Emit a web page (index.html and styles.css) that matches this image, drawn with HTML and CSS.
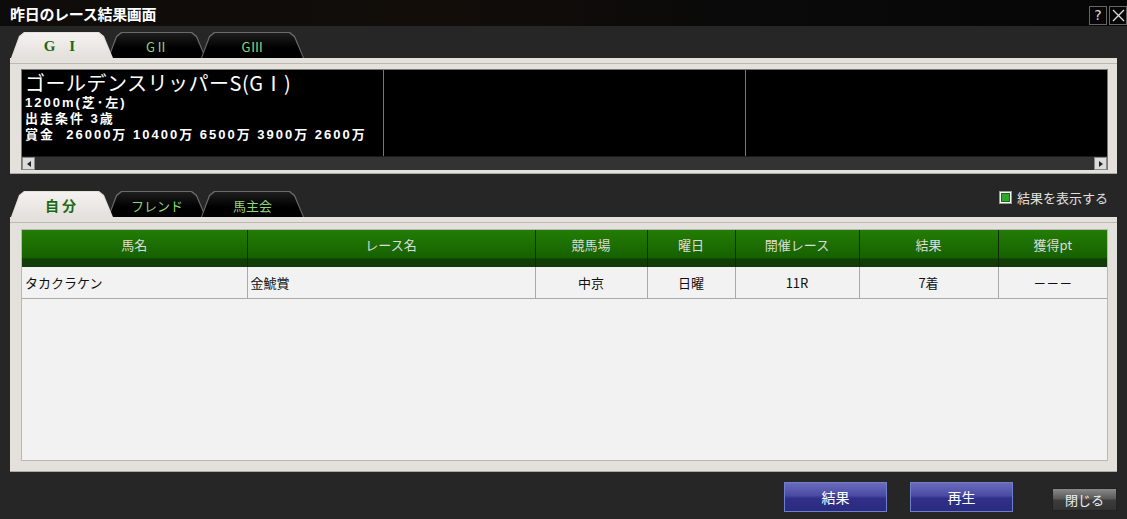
FILE: index.html
```html
<!DOCTYPE html>
<html lang="ja">
<head>
    <meta charset="UTF-8">
    <meta name="viewport" content="width=device-width, initial-scale=1.0">
    <link rel="stylesheet" href="styles.css">
</head>
<body>
    <div class="window">
        <!-- Title bar -->
        <div class="titlebar">
            <span class="title">昨日のレース結果画面</span>
            <div class="title-buttons">
                <span class="tb-btn">?</span>
                <span class="tb-btn">
                    <svg width="13" height="13" viewBox="0 0 13 13"><path d="M1 1 L12 12 M12 1 L1 12" stroke="#ddd" stroke-width="1.3"/></svg>
                </span>
            </div>
        </div>

        <!-- Grade tabs -->
        <div class="tabs">
            <div class="tab active"><span class="tab-label grade">G I</span></div>
            <div class="tab"><span class="tab-label">GⅡ</span></div>
            <div class="tab"><span class="tab-label">GⅢ</span></div>
        </div>

        <!-- Race info -->
        <div class="panel info-panel">
            <div class="info-box">
                <div class="info-cols">
                    <div class="info-col">
                        <div class="race-name">ゴールデンスリッパーS(GⅠ)</div>
                        <div class="race-line">1200m(芝･左)</div>
                        <div class="race-line">出走条件 3歳</div>
                        <div class="race-line">賞金&nbsp; 26000万 10400万 6500万 3900万 2600万</div>
                    </div>
                    <div class="info-col"></div>
                    <div class="info-col"></div>
                </div>
                <div class="hscroll">
                    <span class="arrow-btn">
                        <svg width="6" height="6" viewBox="0 0 6 6"><path d="M5 0 L1 3 L5 6 Z" fill="#222"/></svg>
                    </span>
                    <span class="arrow-btn">
                        <svg width="6" height="6" viewBox="0 0 6 6"><path d="M1 0 L5 3 L1 6 Z" fill="#222"/></svg>
                    </span>
                </div>
            </div>
        </div>

        <!-- Result tabs -->
        <div class="tab-row">
            <div class="tabs">
                <div class="tab active"><span class="tab-label">自分</span></div>
                <div class="tab"><span class="tab-label">フレンド</span></div>
                <div class="tab"><span class="tab-label">馬主会</span></div>
            </div>
            <label class="check">
                <span class="check-box"><span class="check-fill"></span></span>
                結果を表示する
            </label>
        </div>

        <div class="panel result-panel">
            <div class="table-box">
                <table class="results">
                    <thead>
                        <tr>
                            <th class="c-horse">馬名</th>
                            <th class="c-race">レース名</th>
                            <th class="c-course">競馬場</th>
                            <th class="c-day">曜日</th>
                            <th class="c-num">開催レース</th>
                            <th class="c-res">結果</th>
                            <th class="c-pt">獲得pt</th>
                        </tr>
                    </thead>
                    <tbody>
                        <tr>
                            <td class="left">タカクラケン</td>
                            <td class="left">金鯱賞</td>
                            <td>中京</td>
                            <td>日曜</td>
                            <td>11R</td>
                            <td>7着</td>
                            <td>－－－</td>
                        </tr>
                    </tbody>
                </table>
            </div>
        </div>

        <!-- Footer buttons -->
        <div class="footer">
            <button class="btn-blue">結果</button>
            <button class="btn-blue">再生</button>
            <button class="btn-close">閉じる</button>
        </div>
    </div>
</body>
</html>
```

FILE: styles.css
```css
body {
    margin: 0;
    padding: 0;
    background-color: #262626;
    font-family: "Noto Sans CJK JP", "Noto Sans", sans-serif;
}

.window {
    width: 1127px;
    height: 519px;
    background-color: #262626;
    overflow: hidden;
}

/* Title bar */
.titlebar {
    height: 26px;
    background: linear-gradient(to right, #0e0c0a, #120d09 40%, #0a0a0a 65%, #060606);
    display: flex;
    justify-content: space-between;
    align-items: center;
    padding: 0 0 0 10px;
}

.title {
    color: #fff;
    font-size: 15px;
    font-weight: bold;
    letter-spacing: -0.3px;
}

.title-buttons {
    display: flex;
    gap: 2px;
    align-self: flex-start;
    margin-top: 6px;
}

.tb-btn {
    width: 16px;
    height: 17px;
    border: 1px solid #666;
    color: #ddd;
    font-size: 14px;
    line-height: 17px;
    display: flex;
    align-items: center;
    justify-content: center;
    font-family: "DejaVu Sans", sans-serif;
}

/* Tabs */
.tabs {
    display: flex;
    height: 26px;
    padding-left: 11px;
    margin-top: 6px;
}

.tab {
    width: 102px;
    height: 26px;
    margin-right: -5px;
    background: #6a6a6a;
    clip-path: polygon(0 100%, 8px 4px, 13px 0, calc(100% - 14px) 0, calc(100% - 9px) 4px, 100% 100%);
    position: relative;
    display: flex;
    align-items: center;
    justify-content: center;
}

.tab::before {
    content: "";
    position: absolute;
    inset: 1px 1px 0 1px;
    background: linear-gradient(#1e1e1e, #000 60%);
    clip-path: polygon(0 100%, 8px 4px, 13px 0, calc(100% - 14px) 0, calc(100% - 9px) 4px, 100% 100%);
}

.tab-label {
    position: relative;
    color: #8fd67a;
    font-size: 13px;
    padding-top: 2px;
}

.tab.active {
    background: #e4e0dc;
    z-index: 2;
}

.tab.active::before {
    background: linear-gradient(#f4f2f0, #e4e0dc);
}

.tab.active .tab-label {
    color: #1b6a12;
    font-weight: bold;
    font-size: 14px;
    letter-spacing: 3px;
}

.tab.active .tab-label.grade {
    font-family: "Liberation Serif", serif;
    font-size: 15px;
    letter-spacing: 5px;
}

.tabs .tab:nth-child(2) {
    width: 98px;
}

.tabs .tab:nth-child(3) {
    width: 103px;
}

/* Panels */
.panel {
    margin: 0 10px;
    background: #e4e0dc;
    border-bottom: 1px solid #aaa;
    position: relative;
}

.panel::before {
    content: "";
    position: absolute;
    left: 0;
    right: 0;
    top: 5px;
    height: 1px;
    background: #bdb8b4;
}

.info-panel {
    padding: 11px 9px 3px 11px;
}

.info-box {
    border: 1px solid #777;
    border-bottom: none;
    background: #000;
}

.info-cols {
    display: grid;
    grid-template-columns: 362px 362px 1fr;
    height: 86px;
}

.info-col {
    border-right: 1px solid #777;
    padding: 1px 0 0 3px;
    color: #fff;
}

.info-col:last-child {
    border-right: none;
}

.race-name {
    font-size: 20px;
    line-height: 24px;
    letter-spacing: 0.5px;
}

.race-line {
    font-family: "Liberation Sans", "Noto Sans CJK JP", sans-serif;
    font-size: 13px;
    font-weight: bold;
    line-height: 16px;
    letter-spacing: 2px;
    white-space: nowrap;
}

.hscroll {
    height: 13px;
    background: #333;
    display: flex;
    justify-content: space-between;
    border-top: 1px solid #1a1a1a;
}

.arrow-btn {
    width: 13px;
    height: 13px;
    background: #dcdcdc;
    border: 1px solid #888;
    box-sizing: border-box;
    display: flex;
    align-items: center;
    justify-content: center;
}

/* Result tabs row */
.tab-row {
    display: flex;
    justify-content: space-between;
    align-items: flex-end;
    margin-top: 17px;
}

.tab-row .tabs {
    margin-top: 0;
}

.check {
    display: flex;
    align-items: center;
    gap: 5px;
    color: #e0e0e0;
    font-size: 13px;
    margin-right: 19px;
    align-self: flex-start;
    margin-top: -3px;
}

.check-box {
    width: 13px;
    height: 13px;
    background: #fff;
    border: 1px solid #999;
    box-sizing: border-box;
    display: flex;
    align-items: center;
    justify-content: center;
}

.check-fill {
    width: 7px;
    height: 7px;
    background: #2ea82a;
    border: 1px solid #1a6a14;
}

.result-panel {
    padding: 12px 9px 10px 11px;
}

.table-box {
    height: 232px;
    background: #f2f2f2;
    border: 1px solid #b8b8b8;
    box-sizing: border-box;
}

.results {
    width: 100%;
    border-collapse: collapse;
    table-layout: fixed;
    font-size: 13px;
}

.results th {
    height: 37px;
    padding: 0 0 8px 0;
    box-sizing: border-box;
    color: #dcdcdc;
    font-weight: normal;
    background: linear-gradient(#237c04, #166100 75%, #0f3e08 78%, #123a0a);
    border-right: 1px solid #0b2a05;
}

.results th:last-child {
    border-right: none;
}

.results td {
    height: 31px;
    text-align: center;
    color: #111;
    border-right: 1px solid #aaa;
    border-bottom: 1px solid #aaa;
    padding: 0;
}

.results td:last-child {
    border-right: none;
}

.results td.left {
    text-align: left;
    padding-left: 3px;
}

.c-horse { width: 225px; }
.c-race { width: 288px; }
.c-course { width: 112px; }
.c-day { width: 88px; }
.c-num { width: 124px; }
.c-res { width: 139px; }

/* Footer */
.footer {
    display: flex;
    justify-content: flex-end;
    align-items: flex-start;
    padding: 10px 10px 0 0;
}

.btn-blue {
    width: 103px;
    height: 30px;
    margin-right: 23px;
    border: 1px solid #6f7fd0;
    background: linear-gradient(#6b6bbc, #4a4aa2 45%, #30308a 55%, #2a2a7e);
    color: #fff;
    font-family: "Noto Sans CJK JP", sans-serif;
    font-size: 14px;
    padding: 0;
}

.btn-blue + .btn-blue {
    margin-right: 39px;
}

.btn-close {
    width: 65px;
    height: 23px;
    margin-top: 6px;
    border: 1px solid #222;
    background: linear-gradient(#8a8a8a, #5a5a5a 45%, #3c3c3c 55%, #333);
    color: #eee;
    font-family: "Noto Sans CJK JP", sans-serif;
    font-size: 13px;
    padding: 0;
}
```
